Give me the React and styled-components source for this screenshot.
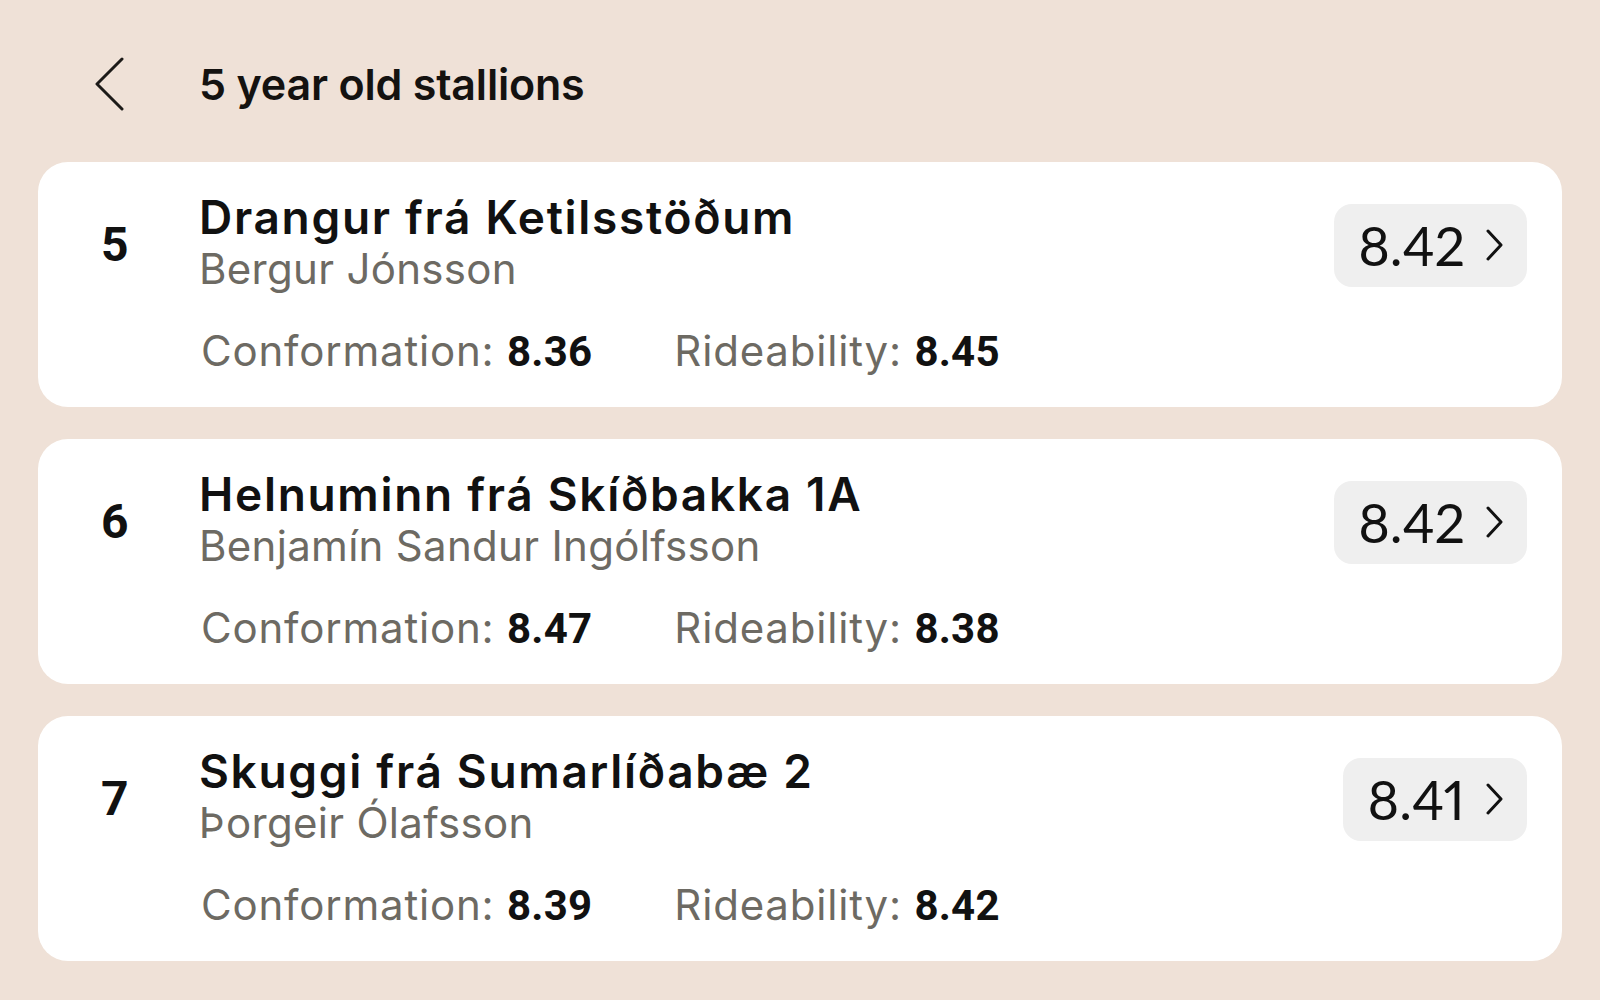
import React from "react";
import styled, { createGlobalStyle } from "styled-components";

const GlobalStyle = createGlobalStyle`
  html, body {
    margin: 0;
    padding: 0;
    background: #efe1d7;
  }
  body {
    font-family: "Inter", "Noto Sans", sans-serif;
    color: #111;
  }
`;

const horses = [
    { rank: 5, name: "Drangur frá Ketilsstöðum", rider: "Bergur Jónsson", total: "8.42", conformation: "8.36", rideability: "8.45" },
    { rank: 6, name: "Helnuminn frá Skíðbakka 1A", rider: "Benjamín Sandur Ingólfsson", total: "8.42", conformation: "8.47", rideability: "8.38" },
    { rank: 7, name: "Skuggi frá Sumarlíðabæ 2", rider: "Þorgeir Ólafsson", total: "8.41", conformation: "8.39", rideability: "8.42" },
];

const BackIcon = () => (
    <svg width="32" height="54" viewBox="0 0 32 54" fill="none">
        <path d="M29 2 L4 27 L29 52" stroke="#1c1a18" strokeWidth="3" strokeLinecap="round" strokeLinejoin="round" />
    </svg>
);

const Chevron = () => (
    <svg width="18" height="32" viewBox="0 0 18 32" fill="none">
        <path d="M3 2 L16 16 L3 30" stroke="#111" strokeWidth="3" strokeLinecap="round" strokeLinejoin="round" />
    </svg>
);

const App = () => {
    return (
        <>
            <GlobalStyle />
            <Page>
                <Header>
                    <Back><BackIcon /></Back>
                    <Title>5 year old stallions</Title>
                </Header>
                <List>
                    {horses.map((h) => (
                        <Card key={h.rank}>
                            <TopRow>
                                <Rank>{h.rank}</Rank>
                                <Names>
                                    <Name>{h.name}</Name>
                                    <Rider>{h.rider}</Rider>
                                </Names>
                                <Score>
                                    {h.total}
                                    <Chevron />
                                </Score>
                            </TopRow>
                            <Scores>
                                <Stat>Conformation: <b>{h.conformation}</b></Stat>
                                <Stat>Rideability: <b>{h.rideability}</b></Stat>
                            </Scores>
                        </Card>
                    ))}
                </List>
            </Page>
        </>
    );
};

const Page = styled.div`
padding: 0 38px 39px;
`;

const Header = styled.header`
height: 162px;
display: flex;
align-items: center;
padding-left: 55px;
`;

const Back = styled.div`
width: 106px;
display: flex;
align-items: center;
margin-top: 6px;
`;

const Title = styled.h1`
margin: 0;
font-size: 43px;
font-weight: 600;
letter-spacing: -0.2px;
color: #141210;
margin-top: 6px;
`;

const List = styled.div`
display: flex;
flex-direction: column;
gap: 32px;
`;

const Card = styled.div`
background: #fff;
border-radius: 30px;
height: 245px;
box-sizing: border-box;
padding: 29px 35px 0 63px;
display: flex;
flex-direction: column;
`;

const TopRow = styled.div`
display: flex;
align-items: center;
`;

const Rank = styled.div`
width: 98px;
margin-top: 4px;
font-family: "Roboto", sans-serif;
font-weight: 700;
font-size: 48px;
color: #111;
`;

const Names = styled.div`
flex: 1;
display: flex;
flex-direction: column;
`;

const Name = styled.div`
font-size: 46px;
line-height: 53px;
font-weight: 600;
letter-spacing: 1.7px;
color: #111;
`;

const Rider = styled.div`
font-size: 42px;
line-height: 50px;
font-weight: 400;
letter-spacing: 0.3px;
color: #6d6a63;
`;

const Score = styled.div`
display: flex;
align-items: center;
gap: 20px;
height: 83px;
margin-top: 5px;
box-sizing: border-box;
padding: 0 24px;
border-radius: 18px;
background: #efefef;
font-family: "Lato", sans-serif;
font-weight: 400;
font-size: 54px;
font-variant-numeric: proportional-nums;
font-feature-settings: "pnum" 1;
color: #111;
`;

const Scores = styled.div`
display: flex;
gap: 82px;
margin-top: 31px;
padding-left: 100px;
`;

const Stat = styled.div`
font-size: 42px;
font-weight: 400;
letter-spacing: 0.8px;
color: #6d6a63;
b {
    font-family: "Roboto", sans-serif;
    font-weight: 700;
    letter-spacing: 0.2px;
    color: #111;
}
`;

export default App;
